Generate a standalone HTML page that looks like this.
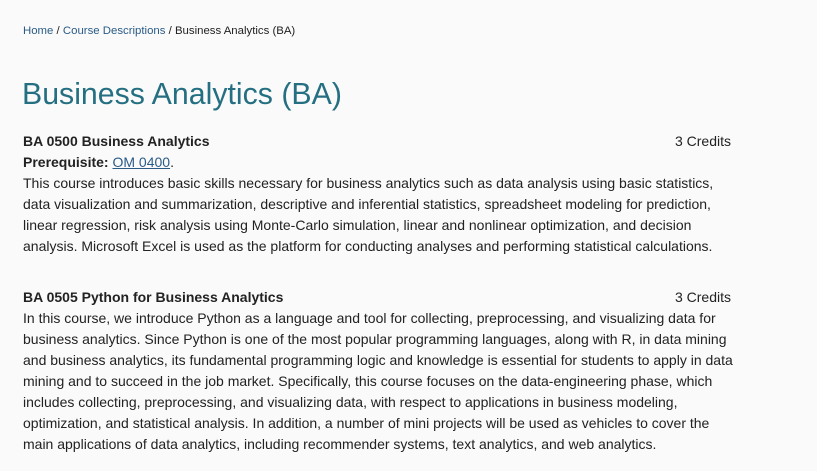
<!DOCTYPE html>
<html><head><meta charset="utf-8"><style>
body{margin:0;background:#fafafa;font-family:"Liberation Sans",Arial,sans-serif;color:#222;width:817px;height:471px;overflow:hidden}
.wrap{position:absolute;left:23px;width:713px}
.bc{position:absolute;left:23px;top:25px;font-size:11.4px;color:#222}
.bc a{color:#2a5b87;text-decoration:none}
h1{position:absolute;left:22px;top:75px;margin:0;font-size:30.3px;font-weight:normal;color:#256f82;line-height:40px}
.c{font-size:14px;line-height:21px}
.h{font-weight:bold;display:flex;justify-content:space-between;padding-right:5px}
.h span:last-child{font-weight:normal}
a.u{color:#2a5b87;text-decoration:underline}
</style></head><body>
<div class="bc"><a>Home</a> / <a>Course Descriptions</a> / Business Analytics (BA)</div>
<h1>Business Analytics (BA)</h1>
<div class="wrap c" style="top:131px">
<div class="h"><span>BA 0500 Business Analytics</span><span>3 Credits</span></div>
<div><b>Prerequisite:</b> <a class="u">OM 0400</a>.</div>
<div>This course introduces basic skills necessary for business analytics such as data analysis using basic statistics, data visualization and summarization, descriptive and inferential statistics, spreadsheet modeling for prediction, linear regression, risk analysis using Monte-Carlo simulation, linear and nonlinear optimization, and decision analysis. Microsoft Excel is used as the platform for conducting analyses and performing statistical calculations.</div>
</div>
<div class="wrap c" style="top:287px">
<div class="h"><span>BA 0505 Python for Business Analytics</span><span>3 Credits</span></div>
<div>In this course, we introduce Python as a language and tool for collecting, preprocessing, and visualizing data for business analytics. Since Python is one of the most popular programming languages, along with R, in data mining and business analytics, its fundamental programming logic and knowledge is essential for students to apply in data mining and to succeed in the job market. Specifically, this course focuses on the data-engineering phase, which includes collecting, preprocessing, and visualizing data, with respect to applications in business modeling, optimization, and statistical analysis. In addition, a number of mini projects will be used as vehicles to cover the main applications of data analytics, including recommender systems, text analytics, and web analytics.</div>
</div>
</body></html>
